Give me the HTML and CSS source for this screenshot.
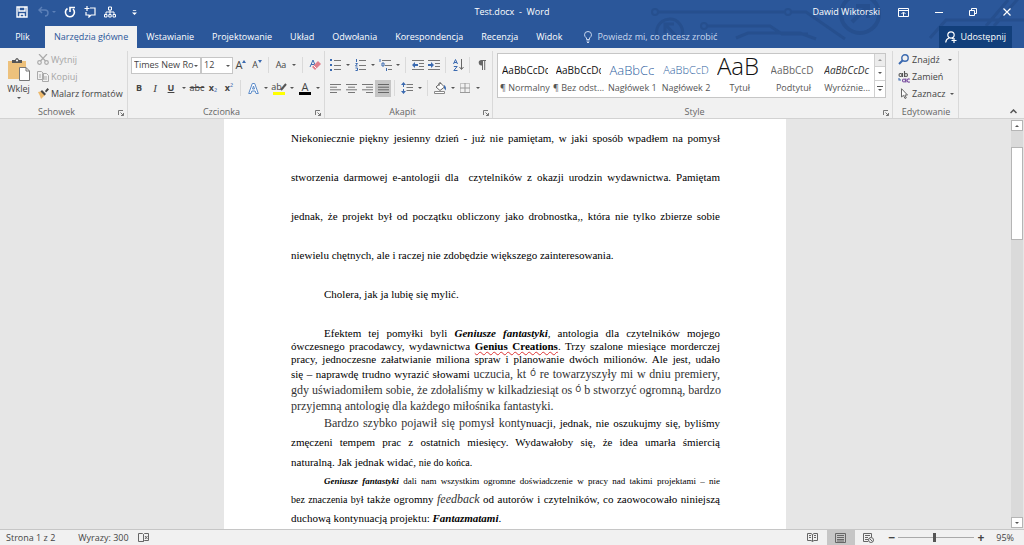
FILE: index.html
```
<!DOCTYPE html>
<html lang="pl">
<head>
    <meta charset="UTF-8">
    <meta name="viewport" content="width=device-width, initial-scale=1.0">
    <title>Test.docx - Word</title>
    <link rel="stylesheet" href="styles.css">
</head>
<body>
    <header class="header">
        <svg class="circuit" width="384" height="48" viewBox="0 0 384 48" fill="none" stroke="#264f8e" stroke-width="3">
            <circle cx="15" cy="12" r="3" stroke-width="2"/>
            <path d="M18 12H144M151 12H166L205 39M67 26H130L142 34H168M96 38L108 33H160L176 39M290 38L306 20H384M346 26L368 0M354 26L384 -8"/>
            <circle cx="148" cy="12" r="3" stroke-width="2"/>
            <circle cx="64" cy="26" r="3" stroke-width="2"/>
            <path d="M18 38A13 13 0 1 1 42 36M25 24L36 36M25 33V24H34"/>
            <circle cx="220" cy="14" r="19" stroke-width="4"/>
            <path d="M212 22L228 6M216 6H228V18" stroke-width="4"/>
        </svg>
        <div class="titlebar">
            <div class="quick">
                <button aria-label="Zapisz"><svg width="12" height="12" viewBox="0 0 12 12" fill="none" stroke="#fff" stroke-width="1.4"><path d="M1 1H11V11H1zM3 1V5H9V1M4 11V8H8V11"/></svg></button>
                <button aria-label="Cofnij" class="dim"><svg width="18" height="12" viewBox="0 0 18 12" fill="none" stroke="#5c80b8" stroke-width="1.4"><path d="M4 1L1 4L4 7M1 4H7Q10 4 10 7T7 10"/><path d="M14 5h4l-2 2z" fill="#5c80b8" stroke="none"/></svg></button>
                <button aria-label="Powtórz"><svg width="12" height="12" viewBox="0 0 12 12" fill="none" stroke="#fff" stroke-width="1.6"><path d="M3.500 2.500A4.500 4.500 0 1 0 9 3M6 6V1.500H11"/></svg></button>
                <button aria-label="Nowy komentarz"><svg width="12" height="12" viewBox="0 0 12 12" fill="none" stroke="#fff" stroke-width="1.2"><path d="M6 2H11V9H7L5 11V9H2V6M3 0V5M.5 2.500H5.500"/></svg></button>
                <button aria-label="Struktura"><svg width="12" height="12" viewBox="0 0 12 12" fill="none" stroke="#fff"><path d="M4.500 1H7.500V4H4.500zM6 4V6M2 8V6H10V8M6 6V8M.5 8.500H3V11H.5zM4.800 8.500H7.200V11H4.800zM9 8.500H11.500V11H9z"/></svg></button>
                <button aria-label="Dostosuj"><svg width="5" height="7" viewBox="0 0 6 8"><path d="M1 1H5V2H1zM0 4H6L3 7z" fill="#fff"/></svg></button>
            </div>
            <span class="title">Test.docx &nbsp;-&nbsp; Word</span>
            <div class="window-controls">
                <span class="user">Dawid Wiktorski</span>
                <button aria-label="Opcje wstążki"><svg width="11" height="9" viewBox="0 0 11 9" fill="none" stroke="#fff"><path d="M.5 .5H10.500V8.500H.5zM.5 2.500H10.500M5.500 8V4.500M3.500 6L5.500 4L7.500 6"/></svg></button>
                <button aria-label="Minimalizuj"><svg width="8" height="8" viewBox="0 0 8 8"><path d="M0 4.500H8" stroke="#fff"/></svg></button>
                <button aria-label="Przywróć"><svg width="8" height="8" viewBox="0 0 8 8" fill="none" stroke="#fff"><path d="M.5 2.500H5.500V7.500H.5zM2.500 2V.5H7.500V5.500H6"/></svg></button>
                <button aria-label="Zamknij"><svg width="8" height="8" viewBox="0 0 8 8"><path d="M.5 .5L7.500 7.500M7.500 .5L.5 7.500" stroke="#fff" stroke-width="1.200"/></svg></button>
            </div>
        </div>
        <nav class="tabs">
            <button class="tab file">Plik</button>
            <button class="tab active">Narzędzia główne</button>
            <button class="tab">Wstawianie</button>
            <button class="tab">Projektowanie</button>
            <button class="tab">Układ</button>
            <button class="tab">Odwołania</button>
            <button class="tab">Korespondencja</button>
            <button class="tab">Recenzja</button>
            <button class="tab">Widok</button>
            <button class="tab tell"><svg width="8" height="12" viewBox="0 0 8 12" fill="none" stroke="#c9d7ee"><path d="M2.500 8.500V7Q.5 5.500 .5 3.800A3.500 3.300 0 0 1 7.500 3.800Q7.500 5.500 5.500 7V8.500zM2.500 10H5.500M3 11.500H5"/></svg>Powiedz mi, co chcesz zrobić</button>
            <button class="share"><svg width="12" height="12" viewBox="0 0 12 12" fill="none" stroke="#fff" stroke-width="1.200"><circle cx="6" cy="4" r="3.200"/><path d="M4 7Q1 8 .7 11.500M7 7L8 8M6.500 9.500H11.500M9 7V12"/></svg>Udostępnij</button>
        </nav>
    </header>

    <section class="ribbon">
        <div class="group clipboard">
            <div class="content">
                <button class="paste">
                    <svg width="22" height="23" viewBox="0 0 22 23"><path d="M0 3H18V21H0z" fill="#edc17c"/><path d="M4 2H7Q9-2 11 2H14V5H4z" fill="#555"/><circle cx="9" cy="2.500" r="1" fill="#fff"/><path d="M11.500 9.500H18L21.500 13V22.500H11.500z" fill="#fff" stroke="#777"/><path d="M18 9.500V13H21.500" fill="none" stroke="#777"/></svg>
                    Wklej
                    <i class="caret"></i>
                </button>
                <div class="stack">
                    <button class="off"><svg width="12" height="11" viewBox="0 0 12 11" fill="none" stroke="#aaa" stroke-width="1.200"><path d="M2 0L8.500 7M10 0L3.500 7"/><circle cx="2.500" cy="8.500" r="1.800"/><circle cx="9.500" cy="8.500" r="1.800"/></svg>Wytnij</button>
                    <button class="off"><svg width="12" height="11" viewBox="0 0 12 11" fill="#f1f1f1" stroke="#aaa"><path d="M.5 .5H4.500L6.500 2.500V8.500H.5zM5.500 2.500H9.500L11.500 4.500V10.500H5.500zM7 6H10M7 8H10M2 4H4M2 6H4"/></svg>Kopiuj</button>
                    <button><svg width="12" height="11" viewBox="0 0 12 11"><path d="M1 4L6 3L8 7L4 11L3 8z" fill="#edb96c"/><path d="M5 2L9 6L7.500 7.500L3.500 3.500zM8 3L10.500 0L12 1.500L9 4.500z" fill="#444"/></svg>Malarz formatów</button>
                </div>
            </div>
            <footer>Schowek<button class="launch" aria-label="Więcej: Schowek"><svg width="6" height="6" viewBox="0 0 6 6" fill="none" stroke="#777"><path d="M.5 5V.5H5M2.500 2.500L5.500 5.500M5.500 3V5.500H3"/></svg></button></footer>
        </div>

        <div class="group font">
            <div class="content rows">
                <div class="row">
                    <span class="select"><select class="family" aria-label="Czcionka"><option>Times New Ro</option></select><i class="caret"></i></span>
                    <span class="select"><select class="size" aria-label="Rozmiar czcionki"><option>12</option></select><i class="caret"></i></span>
                    <button class="tool big" aria-label="Zwiększ czcionkę">A<svg width="4" height="10" viewBox="0 0 4 10"><path d="M0 3L2 0L4 3z" fill="#3b6ab0"/></svg></button>
                    <button class="tool" aria-label="Zmniejsz czcionkę">A<svg width="4" height="10" viewBox="0 0 4 10"><path d="M0 0L2 3L4 0z" fill="#3b6ab0"/></svg></button>
                    <i class="sep"></i>
                    <button class="tool">Aa</button><i class="caret"></i>
                    <i class="sep"></i>
                    <button class="tool" aria-label="Wyczyść formatowanie"><svg width="12" height="12" viewBox="0 0 12 12"><path d="M1 8L4 1L6 6M2 5.500H5" fill="none" stroke="#3b6ab0"/><path d="M3 8L9 2L12 5L6 11z" fill="#e07f8c"/><path d="M4.500 6.500L7.500 9.500" stroke="#fff"/></svg></button>
                </div>
                <div class="row">
                    <button class="tool"><b>B</b></button>
                    <button class="tool serif"><i>I</i></button>
                    <button class="tool"><b><u>U</u></b></button><i class="caret"></i>
                    <button class="tool"><s>abc</s></button>
                    <button class="tool script"><b>x</b><small>₂</small></button>
                    <button class="tool script"><b>x</b><small>²</small></button>
                    <i class="sep"></i>
                    <button class="tool" aria-label="Efekty tekstowe"><svg width="11" height="11" viewBox="0 0 11 11" fill="#fff" stroke="#5b8bc9"><path d="M.7 10.500L4.300 .5H6.700L10.300 10.500H8L7.200 8H3.800L3 10.500zM4.500 6H6.500L5.500 3z"/></svg></button><i class="caret"></i>
                    <button class="tool mark">ab<svg width="7" height="8" viewBox="0 0 7 8"><path d="M1 7L6 1" stroke="#555" stroke-width="2"/></svg></button><i class="caret"></i>
                    <button class="tool color">A</button><i class="caret"></i>
                </div>
            </div>
            <footer>Czcionka<button class="launch" aria-label="Więcej: Czcionka"><svg width="6" height="6" viewBox="0 0 6 6" fill="none" stroke="#777"><path d="M.5 5V.5H5M2.500 2.500L5.500 5.500M5.500 3V5.500H3"/></svg></button></footer>
        </div>

        <div class="group paragraph">
            <div class="content rows">
                <div class="row">
                    <button class="tool" aria-label="Punktory"><svg width="11" height="12" viewBox="0 0 11 12"><path d="M0 0H2V2H0zM0 5H2V7H0zM0 10H2V12H0z" fill="#3b6ab0"/><path d="M4 1.500H11M4 6.500H11M4 10.500H11" stroke="#777"/></svg></button><i class="caret"></i>
                    <button class="tool" aria-label="Numerowanie"><svg width="11" height="12" viewBox="0 0 11 12"><path d="M1.500 0V3M.5 4.500H2.500L.5 7H2.500M.5 9H2.500V11.500H.5" fill="none" stroke="#3b6ab0"/><path d="M4 1.500H11M4 6.500H11M4 10.500H11" stroke="#777"/></svg></button><i class="caret"></i>
                    <button class="tool" aria-label="Lista wielopoziomowa"><svg width="13" height="12" viewBox="0 0 13 12"><path d="M1 0V3M3 4H5V7H3zM7.500 9V12" fill="none" stroke="#3b6ab0"/><path d="M3 1.500H12M6 6.500H13M9 10.500H13" stroke="#777"/></svg></button><i class="caret"></i>
                    <i class="sep"></i>
                    <button class="tool" aria-label="Zmniejsz wcięcie"><svg width="12" height="10" viewBox="0 0 12 10"><path d="M0 .5H12M7 3.500H12M7 6.500H12M0 9.500H12" stroke="#777"/><path d="M0 5L3 2V4H6V6H3V8z" fill="#3b6ab0"/></svg></button>
                    <button class="tool" aria-label="Zwiększ wcięcie"><svg width="12" height="10" viewBox="0 0 12 10"><path d="M0 .5H12M7 3.500H12M7 6.500H12M0 9.500H12" stroke="#777"/><path d="M6 5L3 2V4H0V6H3V8z" fill="#3b6ab0"/></svg></button>
                    <i class="sep"></i>
                    <button class="tool" aria-label="Sortuj"><svg width="11" height="12" viewBox="0 0 11 12" fill="none" stroke="#3b6ab0"><path d="M.5 5L2.500 .5L4.500 5M1 3.500H4M.8 7.500H4.200L.8 11.500H4.500"/><path d="M8.500 0V10M6.500 8L8.500 10.500L10.500 8" stroke="#666"/></svg></button>
                    <i class="sep"></i>
                    <button class="tool pilcrow" aria-label="Pokaż wszystko"><svg width="8" height="10" viewBox="0 0 8 10"><path d="M8 0V1H7.200V10H6.200V1H5V10H4V5.500A2.600 2.600 0 0 1 3 0z" fill="#666"/></svg></button>
                </div>
                <div class="row">
                    <button class="tool" aria-label="Do lewej"><svg width="11" height="9" viewBox="0 0 11 9"><path d="M0 .5H11M0 3.200H7M0 5.800H11M0 8.500H7" stroke="#777"/></svg></button>
                    <button class="tool" aria-label="Do środka"><svg width="11" height="9" viewBox="0 0 11 9"><path d="M0 .5H11M2 3.200H9M0 5.800H11M2 8.500H9" stroke="#777"/></svg></button>
                    <button class="tool" aria-label="Do prawej"><svg width="11" height="9" viewBox="0 0 11 9"><path d="M0 .5H11M4 3.200H11M0 5.800H11M4 8.500H11" stroke="#777"/></svg></button>
                    <button class="tool pressed" aria-label="Wyjustuj"><svg width="11" height="9" viewBox="0 0 11 9"><path d="M0 .5H11M0 3.200H11M0 5.800H11M0 8.500H11" stroke="#666"/></svg></button>
                    <i class="sep"></i>
                    <button class="tool" aria-label="Interlinia"><svg width="12" height="12" viewBox="0 0 12 12"><path d="M5.500 2.500H12M5.500 5.500H12M5.500 8.500H12" stroke="#777"/><path d="M0 3L2.500 0L5 3zM0 9L2.500 12L5 9zM2 3H3V5H2zM2 7H3V9H2z" fill="#3b6ab0"/></svg></button><i class="caret"></i>
                    <i class="sep"></i>
                    <button class="tool" aria-label="Cieniowanie"><svg width="13" height="12" viewBox="0 0 13 12"><path d="M2 5L6.500 1L10.500 5L6 8.500zM5 4V1.500Q6-1 7 2" fill="#fff" stroke="#666"/><path d="M10 3Q13 5 11.500 8.500L10 6z" fill="#3b6ab0"/><path d="M.5 9.500H10.500V11.500H.5z" fill="#fff" stroke="#888"/></svg></button><i class="caret"></i>
                    <button class="tool" aria-label="Obramowanie"><svg width="10" height="10" viewBox="0 0 10 10" fill="none" stroke="#999"><path d="M.5 .5H9.500V9.500H.5z" stroke-dasharray="1 1"/><path d="M5 0V10M0 5H10M0 9.500H10"/></svg></button><i class="caret"></i>
                </div>
            </div>
            <footer>Akapit<button class="launch" aria-label="Więcej: Akapit"><svg width="6" height="6" viewBox="0 0 6 6" fill="none" stroke="#777"><path d="M.5 5V.5H5M2.500 2.500L5.500 5.500M5.500 3V5.500H3"/></svg></button></footer>
        </div>

        <div class="group styles">
            <div class="gallery">
                <button class="style"><span class="sample">AaBbCcDc</span><span>¶ Normalny</span></button>
                <button class="style"><span class="sample">AaBbCcDc</span><span>¶ Bez odst...</span></button>
                <button class="style"><span class="sample h1">AaBbCc</span><span>Nagłówek 1</span></button>
                <button class="style"><span class="sample h2">AaBbCcD</span><span>Nagłówek 2</span></button>
                <button class="style"><span class="sample big-title">AaB</span><span>Tytuł</span></button>
                <button class="style"><span class="sample subtitle">AaBbCcD</span><span>Podtytuł</span></button>
                <button class="style"><span class="sample emphasis">AaBbCcDc</span><span>Wyróżnie...</span></button>
                <div class="gallery-scroll">
                    <button class="disabled" aria-label="W górę"><i class="caret up"></i></button>
                    <button aria-label="W dół"><i class="caret"></i></button>
                    <button aria-label="Więcej stylów"><svg width="6" height="6" viewBox="0 0 6 6"><path d="M0 0H6V1H0zM1 3H5L3 5z" fill="#555"/></svg></button>
                </div>
            </div>
            <footer>Style<button class="launch" aria-label="Więcej: Style"><svg width="6" height="6" viewBox="0 0 6 6" fill="none" stroke="#777"><path d="M.5 5V.5H5M2.500 2.500L5.500 5.500M5.500 3V5.500H3"/></svg></button></footer>
        </div>

        <div class="group editing">
            <div class="stack">
                <button><svg width="12" height="11" viewBox="0 0 12 11" fill="none" stroke="#3b6ab0" stroke-width="1.400"><circle cx="7" cy="4" r="3.200"/><path d="M4.500 6.500L1 10" stroke-width="2"/></svg>Znajdź<i class="caret far"></i></button>
                <button><svg width="12" height="12" viewBox="0 0 12 12" fill="none" stroke-width="1.100"><g stroke="#555"><circle cx="2.500" cy="4" r="1.500"/><path d="M4.500 2V6M6.500 0V6"/><circle cx="8" cy="4" r="1.500"/></g><g stroke="#7a4fa0"><circle cx="6" cy="9.500" r="1.500"/><path d="M7.800 7.500V11.500M11.800 8.300A1.600 1.600 0 1 0 11.800 10.700"/></g><path d="M1 7V9H3" stroke="#3b6ab0"/></svg>Zamień</button>
                <button><svg width="12" height="11" viewBox="0 0 12 11"><path d="M3.500 .7V9L5.500 7.300L7 10.500L8.300 9.900L6.900 7H9.500z" fill="#fff" stroke="#666"/></svg>Zaznacz<i class="caret"></i></button>
            </div>
            <footer>Edytowanie</footer>
        </div>
        <button class="collapse" aria-label="Zwiń wstążkę"><svg width="7" height="5" viewBox="0 0 7 5"><path d="M.5 4L3.500 1L6.500 4" fill="none" stroke="#555" stroke-width="1.500"/></svg></button>
    </section>

    <main class="workspace">
        <div class="canvas">
            <article class="page">
                <p class="wide">
                    <span class="line">Niekoniecznie piękny jesienny dzień - już nie pamiętam, w jaki sposób wpadłem na pomysł</span>
                    <span class="line">stworzenia darmowej e-antologii dla&nbsp; czytelników z okazji urodzin wydawnictwa. Pamiętam</span>
                    <span class="line">jednak, że projekt był od początku obliczony jako drobnostka,, która nie tylko zbierze sobie</span>
                    <span class="line last">niewielu chętnych, ale i raczej nie zdobędzie większego zainteresowania.</span>
                </p>
                <p class="wide"><span class="line last indent">Cholera, jak ja lubię się mylić.</span></p>
                <p class="tight">
                    <span class="line indent">Efektem tej pomyłki byli <b><i>Geniusze fantastyki</i></b>, antologia dla czytelników mojego</span>
                    <span class="line">ówczesnego pracodawcy, wydawnictwa <b class="misspelled">Genius Creations</b>. Trzy szalone miesiące morderczej</span>
                    <span class="line">pracy, jednoczesne załatwianie miliona spraw i planowanie dwóch milionów. Ale jest, udało</span>
                    <span class="line mid">się – naprawdę trudno wyrazić słowami <span class="alt">uczucia, kt <span class="accent">ó</span> re towarzyszyły mi w dniu premiery,</span></span>
                    <span class="line mid alt">gdy uświadomiłem sobie, że zdołaliśmy w kilkadziesiąt os <span class="accent">ó</span> b stworzyć ogromną, bardzo</span>
                    <span class="line mid alt last">przyjemną antologię dla każdego miłośnika fantastyki.</span>
                </p>
                <p class="loose">
                    <span class="line snug indent"><span class="alt">Bardzo szybko pojawił się pomysł konty</span>nuacji, jednak, nie oszukujmy się, byliśmy</span>
                    <span class="line">zmęczeni tempem prac z ostatnich miesięcy. Wydawałoby się, że idea umarła śmiercią</span>
                    <span class="line last">naturalną. Jak jednak widać, <span class="little">nie do końca.</span></span>
                </p>
                <p class="loose">
                    <span class="line snug tiny indent"><b><i>Geniusze fantastyki</i></b> dali nam wszystkim ogromne doświadczenie w pracy nad takimi projektami – nie</span>
                    <span class="line snug"><span class="little">bez znaczenia był</span> także ogromny <i class="alt">feedback</i> od autorów i czytelników, co zaowocowało niniejszą</span>
                    <span class="line last">duchową kontynuacją projektu: <b><i>Fantazmatami</i></b>.</span>
                </p>
            </article>
        </div>
        <div class="scrollbar">
            <button aria-label="Przewiń w górę"><i class="caret up"></i></button>
            <div class="track"><div class="thumb"></div></div>
            <button aria-label="Przewiń w dół"><i class="caret"></i></button>
        </div>
    </main>

    <footer class="status">
        <span class="pages">Strona 1 z 2</span>
        <span class="words">Wyrazy: 300</span>
        <svg width="11" height="9" viewBox="0 0 11 9" fill="none" stroke="#666"><path d="M5.500 8.500H.5V.5H4.500L5.500 1.500V8.500L6.500 7.500H10.500V.5H6.500L5.500 1.500M7 3L9.500 6M9.500 3L7 6"/></svg>
        <div class="views">
            <button aria-label="Tryb odczytu"><svg width="11" height="9" viewBox="0 0 11 9" fill="none" stroke="#666"><path d="M5.500 1.500V8.500M.5 .5H4L5.500 1.500L7 .5H10.500V7.500H7L5.500 8.500L4 7.500H.5zM2 2.500H4M2 4.500H4M7 2.500H9M7 4.500H9"/></svg></button>
            <button class="current" aria-label="Układ wydruku"><svg width="11" height="10" viewBox="0 0 11 10" fill="none" stroke="#666"><path d="M.5 .5H10.500V9.500H.5zM2 2.500H9M2 4.500H9M2 6.500H9M2 8H9"/></svg></button>
            <button aria-label="Układ sieci Web"><svg width="11" height="10" viewBox="0 0 11 10" fill="none" stroke="#666"><path d="M5 8.500H.5V.5H8.500V4M2 2.500H7M2 4.500H5M2 6.500H5"/><circle cx="8" cy="7" r="2.500"/><path d="M6.500 5.500L9.500 8.500"/></svg></button>
        </div>
        <label class="zoom"><span>−</span><input type="range" min="10" max="180" value="91" aria-label="Powiększenie"><span>+</span></label>
        <span class="percent">95%</span>
    </footer>
</body>
</html>
```
FILE: styles.css
```
* {
    box-sizing: border-box;
}
body {
    margin: 0;
    height: 100vh;
    display: flex;
    flex-direction: column;
    overflow: hidden;
    font-family: "Open Sans", "Noto Sans", sans-serif;
    font-size: 9px;
    line-height: 12px;
    color: #444;
    background: #e6e6e6;
}
button, select {
    font: inherit;
    color: inherit;
    background: none;
    border: none;
    padding: 0;
    margin: 0;
    display: flex;
    align-items: center;
    justify-content: center;
    white-space: nowrap;
}
svg {
    flex: none;
}

/* title bar and tabs */
.header {
    position: relative;
    background: #2b579a;
    color: #fff;
}
.circuit {
    position: absolute;
    right: 0;
    top: 0;
}
.titlebar {
    position: relative;
    display: grid;
    grid-template-columns: 1fr auto 1fr;
    align-items: center;
    height: 26px;
    padding-bottom: 2px;
}
.quick {
    display: flex;
    align-items: center;
    gap: 8px;
    padding-left: 16px;
}
.quick .dim {
    margin-left: 2px;
}
.quick button:last-child {
    margin-left: 8px;
}
.window-controls {
    display: flex;
    justify-content: flex-end;
    align-items: center;
    gap: 26px;
    padding-right: 13px;
}
.user {
    margin-right: -8px;
}
.tabs {
    position: relative;
    display: flex;
    height: 22px;
}
.tab {
    padding: 0 9px;
}
.file {
    width: 45px;
}
.active {
    background: #f1f1f1;
    color: #2b579a;
}
.tell {
    color: #c9d7ee;
    gap: 5px;
    margin-left: 4px;
}
.share {
    margin: 0 12px 0 auto;
    padding: 0 6px;
    gap: 3px;
    background: #123f7b;
}

/* ribbon */
.ribbon {
    display: flex;
    height: 71px;
    background: #f1f1f1;
    border-bottom: 1px solid #d2d2d2;
}
.group {
    flex: none;
    display: flex;
    flex-direction: column;
    justify-content: space-between;
    border-right: 1px solid #d9d9d9;
    margin-top: 3px;
}
.group footer {
    position: relative;
    text-align: center;
    color: #666;
}
.launch {
    position: absolute;
    right: 3px;
    top: 4px;
}
.content {
    display: flex;
}
.caret {
    width: 9px;
    display: flex;
    justify-content: center;
}
.caret::after {
    content: "";
    border: 2px solid transparent;
    border-top-color: #555;
    border-bottom: none;
}
.caret.up::after {
    border-top: none;
    border-bottom: 2px solid #555;
}
.clipboard {
    width: 128px;
}
.clipboard footer {
    padding-right: 14px;
}
.paste {
    flex-direction: column;
    width: 37px;
    gap: 2px;
    padding-top: 3px;
}
.stack {
    display: flex;
    flex-direction: column;
    align-items: flex-start;
}
.stack button {
    height: 17px;
    gap: 2px;
}
.stack .far {
    margin-left: 4px;
}
.off {
    color: #a6a6a6;
}
.font {
    width: 197px;
    padding-left: 3px;
}
.font footer {
    padding-right: 12px;
}
.paragraph {
    width: 168px;
    padding-left: 2px;
}
.paragraph footer {
    padding-right: 14px;
}
.rows {
    flex-direction: column;
    gap: 7px;
    padding-top: 6px;
}
.row {
    display: flex;
    align-items: center;
    height: 16px;
}
.tool {
    width: 16px;
    height: 17px;
}
.tool.big {
    font-size: 11px;
}
.serif {
    font-family: "Liberation Serif", serif;
    font-size: 11px;
}
.script small {
    font-size: 9px;
    color: #3b6ab0;
}
.mark {
    border-bottom: 3px solid #ff0;
}
.mark svg {
    margin-left: -2px;
}
.color {
    border-bottom: 3px solid #000;
    font-size: 11px;
}
.mark, .color {
    width: 12px;
    height: 14px;
    margin: 0 2px;
}
.font .row .caret {
    width: 10px;
}
.pressed {
    background: #c5c5c5;
}
.sep {
    width: 1px;
    height: 16px;
    margin: 0 4px 0 3px;
    background: #dadada;
}
.select {
    position: relative;
    display: flex;
}
.select select {
    appearance: none;
    height: 17px;
    padding-left: 2px;
    border: 1px solid #c6c6c6;
    background: #fff;
}
.family {
    width: 70px;
}
.size {
    width: 32px;
}
.select .caret {
    position: absolute;
    right: 0;
    top: 8px;
}

/* style gallery */
.styles {
    flex: 1;
    min-width: 0;
    padding-left: 4px;
}
.gallery {
    display: flex;
    height: 45px;
    margin: 2px 6px 0 0;
    border: 1px solid #c6c6c6;
    background: #fff;
}
.style {
    flex: 1;
    min-width: 0;
    flex-direction: column;
    justify-content: flex-end;
    padding: 0 4px 3px;
    color: #555;
}
.sample {
    width: 100%;
    height: 28px;
    line-height: 32px;
    overflow: hidden;
    text-align: left;
    color: #111;
    font-size: 10px;
}
.sample.h1 {
    font-size: 13px;
    font-weight: 300;
    color: #2f5f9f;
}
.sample.h2 {
    font-size: 11px;
    font-weight: 300;
    color: #2f5f9f;
}
.sample.big-title {
    font-size: 24px;
    font-weight: 300;
    line-height: 24px;
}
.sample.subtitle {
    color: #666;
}
.sample.emphasis {
    font-style: italic;
    color: #333;
}
.gallery-scroll {
    display: grid;
    width: 11px;
    border-left: 1px solid #d0d0d0;
}
.gallery-scroll button + button {
    border-top: 1px solid #d0d0d0;
}
.disabled {
    background: #e1e1e1;
    opacity: 0.6;
}
.editing {
    width: 66px;
    padding-left: 5px;
}
.editing footer {
    padding-right: 4px;
}
.collapse {
    width: 22px;
    margin: auto 0 4px 43px;
}

/* document */
.workspace {
    flex: 1;
    min-height: 0;
    display: flex;
}
.canvas {
    flex: 1;
    overflow: hidden;
}
.page {
    width: 562px;
    min-height: 100%;
    margin: 0 auto;
    padding: 0 66px 0 67px;
    background: #fff;
    color: #000;
    font-family: "Liberation Serif", serif;
    font-size: 11px;
}
.page p {
    margin: 0;
}
.line {
    display: block;
    text-align: justify;
    text-align-last: justify;
    white-space: nowrap;
}
.last {
    text-align-last: left;
}
.indent {
    padding-left: 33px;
}
.wide {
    line-height: 39px;
}
.page .tight {
    line-height: 13px;
    margin-top: 13px;
}
.mid {
    line-height: 16px;
}
.loose {
    line-height: 20px;
}
.snug {
    line-height: 18px;
}
.alt {
    font-size: 12px;
    color: #333;
}
.accent {
    font-family: "Open Sans", sans-serif;
    font-size: 10px;
    vertical-align: 2px;
}
.little {
    font-size: 10px;
}
.tiny {
    font-size: 9px;
}
.line .alt, .line .little, .line .accent {
    line-height: 1;
}
.misspelled {
    text-decoration: underline wavy #d33 1px;
}
.scrollbar {
    width: 14px;
    display: flex;
    flex-direction: column;
    padding: 1px;
}
.scrollbar button {
    height: 11px;
    border: 1px solid #b5b5b5;
    background: #fff;
}
.track {
    flex: 1;
    padding-top: 16px;
    background: #dadada;
}
.thumb {
    height: 25%;
    border: 1px solid #b5b5b5;
    background: #fff;
}

/* status bar */
.status {
    display: flex;
    align-items: center;
    height: 16px;
    padding: 0 10px 0 6px;
    background: #f1f1f1;
    border-top: 1px solid #c6c6c6;
}
.words {
    margin: 0 9px 0 23px;
}
.views {
    display: flex;
    margin-left: auto;
}
.views button {
    width: 28px;
    height: 15px;
}
.current {
    background: #c6c6c6;
}
.zoom {
    display: flex;
    align-items: center;
    gap: 3px;
    margin: 0 12px 0 6px;
    font-size: 12px;
    font-weight: bold;
}
.zoom input {
    appearance: none;
    width: 76px;
    height: 9px;
    margin: 0;
    background: linear-gradient(#aaa, #aaa) center / 100% 1px no-repeat;
}
.zoom input::-webkit-slider-thumb {
    appearance: none;
    width: 3px;
    height: 9px;
    background: #555;
}
```
